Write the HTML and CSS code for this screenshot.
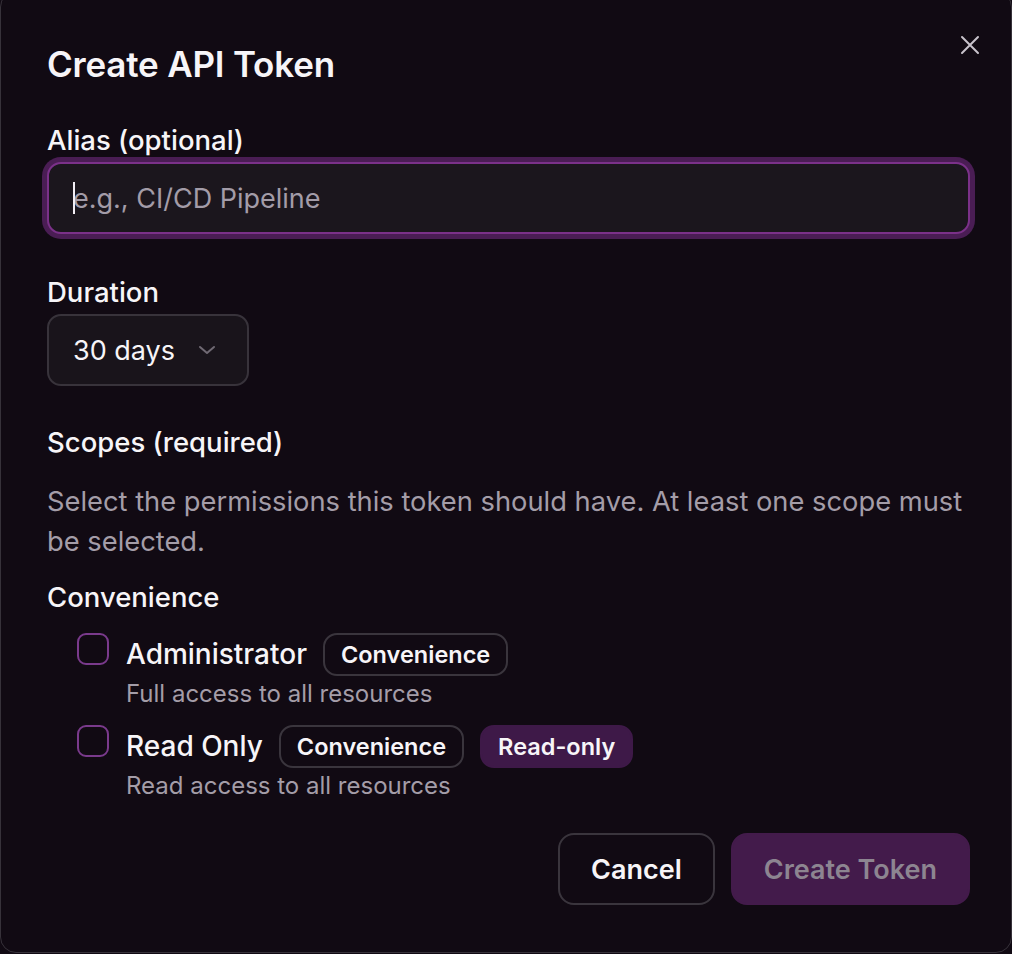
FILE: index.html
```html
<!DOCTYPE html>
<html lang="en">
<head>
<meta charset="utf-8">
<title>Create API Token</title>
<link rel="stylesheet" href="styles.css">
</head>
<body>
<div class="dialog">
  <button class="close" aria-label="Close">
    <svg width="20" height="20" viewBox="0 0 20 20" fill="none" stroke="currentColor" stroke-width="2" stroke-linecap="round"><path d="M2 2L18 18M18 2L2 18"/></svg>
  </button>
  <h1 class="title">Create API Token</h1>

  <label class="label">Alias (optional)</label>
  <div class="input-wrap">
    <input class="input" type="text" placeholder="e.g., CI/CD Pipeline">
    <span class="caret"></span>
  </div>

  <label class="label label-gap">Duration</label>
  <div class="select">
    <span>30 days</span>
    <svg class="chev" width="18" height="10" viewBox="0 0 18 10" fill="none" stroke="currentColor" stroke-width="2" stroke-linecap="round" stroke-linejoin="round"><path d="M2 2L9 8L16 2"/></svg>
  </div>

  <div class="label label-scopes">Scopes (required)</div>
  <p class="desc">Select the permissions this token should have. At least one scope must be selected.</p>

  <div class="group-title">Convenience</div>
  <div class="scopes">
    <div class="scope">
      <span class="checkbox"></span>
      <div class="scope-body">
        <div class="scope-head">
          <span class="scope-name">Administrator</span>
          <span class="badge">Convenience</span>
        </div>
        <div class="scope-desc">Full access to all resources</div>
      </div>
    </div>
    <div class="scope">
      <span class="checkbox"></span>
      <div class="scope-body">
        <div class="scope-head">
          <span class="scope-name">Read Only</span>
          <span class="badge">Convenience</span>
          <span class="badge badge-fill">Read-only</span>
        </div>
        <div class="scope-desc">Read access to all resources</div>
      </div>
    </div>
  </div>

  <div class="actions">
    <button class="btn btn-outline">Cancel</button>
    <button class="btn btn-primary" disabled>Create Token</button>
  </div>
</div>
</body>
</html>
```

FILE: styles.css
```css
* { box-sizing: border-box; }

html, body {
  margin: 0;
  padding: 0;
  background: #110a13;
}

body {
  font-family: Inter, "Noto Sans", "Liberation Sans", sans-serif;
  color: #f7f5f8;
  overflow: hidden;
}

.dialog {
  position: relative;
  width: 1012px;
  height: 962px;
  margin-top: -9px;
  border: 1px solid #37323a;
  border-radius: 16px;
  background: #110a13;
  padding: 52px 41px 0 46px;
  display: flex;
  flex-direction: column;
  align-items: flex-start;
}

.close {
  position: absolute;
  top: 43px;
  right: 31px;
  padding: 0;
  border: 0;
  background: none;
  color: #c9c3cc;
  width: 20px;
  height: 20px;
  display: flex;
}

.title {
  margin: 0;
  font-size: 35px;
  line-height: 40px;
  font-weight: 600;
  letter-spacing: -0.2px;
}

.label {
  display: block;
  margin-top: 40px;
  font-size: 27.5px;
  line-height: 32px;
  font-weight: 500;
}

.label-gap { margin-top: 42px; }
.label-scopes { margin-top: 40px; }

.input-wrap {
  position: relative;
  align-self: stretch;
  margin-top: 6px;
}

.input {
  display: block;
  width: 100%;
  height: 72px;
  border: 2px solid #7b3189;
  border-radius: 14px;
  background: #1b161d;
  box-shadow: 0 0 0 5px #4a1d54;
  padding: 0 24px;
  font-family: inherit;
  font-size: 27px;
  color: #f7f5f8;
  outline: none;
}

.input::placeholder { color: #a39ca8; }

.caret {
  position: absolute;
  left: 26px;
  top: 20px;
  width: 2px;
  height: 32px;
  background: #f2eef4;
}

.select {
  margin-top: 6px;
  width: 202px;
  height: 72px;
  border: 2px solid #38333b;
  border-radius: 14px;
  background: #19141b;
  display: flex;
  align-items: center;
  justify-content: space-between;
  padding: 0 31px 0 24px;
  font-size: 27px;
}

.chev { color: #6f6973; }

.desc {
  margin: 24px 0 0;
  font-size: 27.3px;
  line-height: 40px;
  color: #a49da8;
}

.group-title {
  margin-top: 19px;
  font-size: 27.5px;
  line-height: 32px;
  font-weight: 500;
}

.scopes {
  margin-top: 20px;
  padding-left: 30px;
  display: flex;
  flex-direction: column;
  gap: 15px;
}

.scope {
  display: flex;
  align-items: flex-start;
  gap: 17px;
}

.checkbox {
  width: 32px;
  height: 32px;
  border: 2px solid #7a3a8c;
  border-radius: 9px;
  flex: none;
}

.scope-head {
  display: flex;
  align-items: center;
  gap: 16px;
}

.scope-name {
  font-size: 28px;
  line-height: 43px;
  font-weight: 500;
}

.badge {
  height: 43px;
  border: 2px solid #3a353d;
  border-radius: 14px;
  padding: 0 16px;
  font-size: 23.5px;
  line-height: 39px;
  font-weight: 600;
}

.badge-fill {
  background: #3e1948;
  border-color: #3e1948;
}

.scope-desc {
  margin-top: 2px;
  font-size: 24px;
  line-height: 32px;
  color: #a49da8;
}

.actions {
  align-self: stretch;
  margin-top: 31px;
  display: flex;
  justify-content: flex-end;
  gap: 16px;
}

.btn {
  height: 72px;
  border-radius: 16px;
  font-family: inherit;
  font-size: 27px;
  font-weight: 600;
  padding: 0 31px;
}

.btn-outline {
  background: #110a13;
  border: 2px solid #3a353d;
  color: #f7f5f8;
}

.btn-primary {
  background: #431b4b;
  border: 2px solid #431b4b;
  color: #8d8591;
}
```
